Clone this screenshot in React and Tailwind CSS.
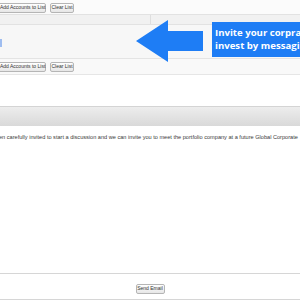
import React from "react";

function Btn({ children, className = "" }) {
  return (
    <div
      className={
        "h-[10px] px-[2px] flex items-center border border-[#b5b5b5] rounded-[2px] bg-gradient-to-b from-[#ffffff] to-[#e6e6e6] text-[5px] leading-none text-[#333] whitespace-nowrap " +
        className
      }
      style={{ fontFamily: "Arial, 'Liberation Sans', sans-serif" }}
    >
      {children}
    </div>
  );
}

export default function App() {
  return (
    <div
      className="relative w-[300px] h-[300px] overflow-hidden bg-white"
      style={{ fontFamily: "Arial, 'Liberation Sans', sans-serif" }}
    >
      {/* top buttons */}
      <div className="h-[14px] bg-[#fbfbfb] flex items-center gap-[4px] pt-[1px]">
        <Btn className="ml-[-3px] w-[49px]">Add Accounts to List</Btn>
        <Btn className="w-[24px] justify-center">Clear List</Btn>
      </div>
      {/* table header */}
      <div className="h-[11px] border-y border-[#e2e2e2] bg-[#f1f1f1] flex">
        <div className="w-[151px] border-r border-[#dedede]"></div>
        <div className="flex-1"></div>
      </div>
      {/* table body */}
      <div className="h-[34px] bg-[#f7f7f7] border-b border-[#e4e4e4] flex items-center">
        <div className="w-[2px] h-[8px] bg-[#9fbdf0] mt-[2px]"></div>
      </div>
      {/* bottom buttons */}
      <div className="h-[16px] bg-[#f9f9f9] border-b border-[#e6e6e6] flex items-center gap-[4px]">
        <Btn className="ml-[-3px] w-[49px]">Add Accounts to List</Btn>
        <Btn className="w-[24px] justify-center">Clear List</Btn>
      </div>
      <div className="h-[31px]"></div>
      {/* gray bar */}
      <div className="h-[20px] border-t border-[#d4d4d4] bg-gradient-to-b from-[#ededed] to-[#d9d9d9]"></div>
      {/* message */}
      <div className="h-[147px] pt-[9px] overflow-hidden">
        <div className="text-[5.6px] leading-none text-[#3a3a3a] whitespace-nowrap ml-[-1px]">
          en carefully invited to start a discussion and we can invite you to meet the portfolio company at a future Global Corporate
        </div>
      </div>
      {/* footer */}
      <div className="h-[27px] border-t border-[#d6d6d6] border-b flex items-center justify-center">
        <Btn className="w-[29px] justify-center mt-[4px]">Send Email</Btn>
      </div>

      {/* annotation arrow */}
      <svg className="absolute left-[136px] top-[20px]" width="67" height="43" viewBox="0 0 67 43">
        <polygon points="0,21 32,0 32,11 67,11 67,31 32,31 32,42" fill="#1e7df5" />
      </svg>
      {/* annotation box */}
      <div
        className="absolute left-[212px] top-[22px] w-[88px] h-[35px] bg-[#1e7df5] text-white font-bold text-[9.6px] leading-[13px] pl-[3px] pt-[4px] whitespace-nowrap overflow-hidden"
        style={{ fontFamily: "'Open Sans', sans-serif" }}
      >
        <div>Invite your corpra</div>
        <div>invest by messagi</div>
      </div>
    </div>
  );
}
